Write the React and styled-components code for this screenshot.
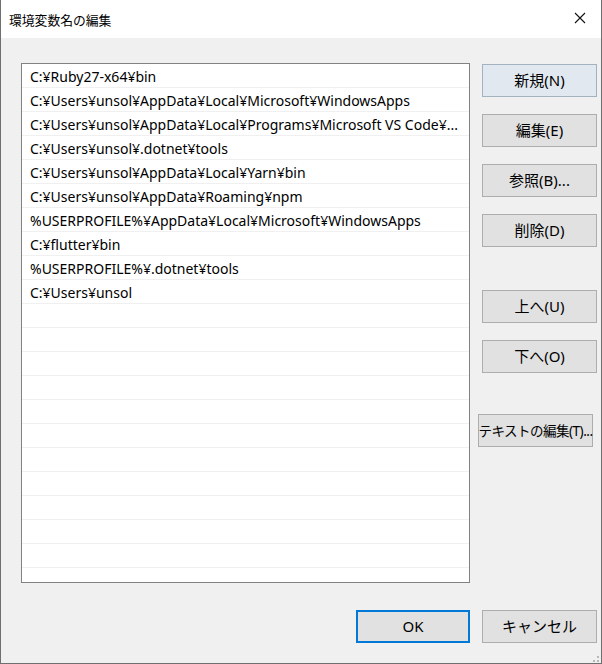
import React from "react";
import styled, { createGlobalStyle } from "styled-components";

const GlobalStyle = createGlobalStyle`
    html, body {
        margin: 0;
        padding: 0;
        background: #f0f0f0;
    }
    * {
        box-sizing: border-box;
    }
`;

const paths = [
    "C:¥Ruby27-x64¥bin",
    "C:¥Users¥unsol¥AppData¥Local¥Microsoft¥WindowsApps",
    "C:¥Users¥unsol¥AppData¥Local¥Programs¥Microsoft VS Code¥...",
    "C:¥Users¥unsol¥.dotnet¥tools",
    "C:¥Users¥unsol¥AppData¥Local¥Yarn¥bin",
    "C:¥Users¥unsol¥AppData¥Roaming¥npm",
    "%USERPROFILE%¥AppData¥Local¥Microsoft¥WindowsApps",
    "C:¥flutter¥bin",
    "%USERPROFILE%¥.dotnet¥tools",
    "C:¥Users¥unsol",
];

const sideButtons = [
    { id: "new", label: "新規(N)", hot: true },
    { id: "edit", label: "編集(E)" },
    { id: "browse", label: "参照(B)..." },
    { id: "delete", label: "削除(D)" },
    { id: "up", label: "上へ(U)", gap: 26 },
    { id: "down", label: "下へ(O)" },
    { id: "text", label: "テキストの編集(T)...", gap: 24, shift: -4, tight: true },
];

export default function App() {
    const rows = [];
    for (let i = 0; i < 22; i++) {
        rows.push(<Row key={i}>{paths[i] || ""}</Row>);
    }

    return (
        <>
            <GlobalStyle />
            <Window>
                <TitleBar>
                    <Title>環境変数名の編集</Title>
                    <CloseButton>
                        <svg width="12" height="12" viewBox="0 0 12 12">
                            <path d="M1 1 L11 11 M11 1 L1 11" stroke="#111" strokeWidth="1.1" />
                        </svg>
                    </CloseButton>
                </TitleBar>

                <Body>
                    <ListBox>{rows}</ListBox>

                    <SideColumn>
                        {sideButtons.map((b) => (
                            <Button
                                key={b.id}
                                $hot={b.hot}
                                $gap={b.gap}
                                $shift={b.shift}
                                $tight={b.tight}
                            >
                                {b.label}
                            </Button>
                        ))}
                    </SideColumn>

                    <OkButton>OK</OkButton>
                    <Button>キャンセル</Button>
                </Body>

                <Grip>
                    <svg width="12" height="12" viewBox="0 0 12 12">
                        <g fill="#b8b8b8">
                            <rect x="9" y="1" width="2" height="2" />
                            <rect x="5" y="5" width="2" height="2" />
                            <rect x="9" y="5" width="2" height="2" />
                            <rect x="1" y="9" width="2" height="2" />
                            <rect x="5" y="9" width="2" height="2" />
                            <rect x="9" y="9" width="2" height="2" />
                        </g>
                    </svg>
                </Grip>
            </Window>
        </>
    );
}

// style divs/wrappers here
const Window = styled.div`
    position: relative;
    width: 602px;
    height: 664px;
    border: 1px solid #6f6f6f;
    border-top: none;
    background: #f0f0f0;
    display: flex;
    flex-direction: column;
    font-family: "Noto Sans", "Noto Sans CJK JP", sans-serif;
    color: #000;
`;

const TitleBar = styled.div`
    height: 38px;
    background: #fff;
    display: flex;
    align-items: center;
    justify-content: space-between;
    padding-left: 8px;
`;

const Title = styled.div`
    font-family: "Noto Sans CJK JP", sans-serif;
    font-size: 12.8px;
    color: #000;
`;

const CloseButton = styled.div`
    width: 46px;
    height: 38px;
    display: flex;
    align-items: center;
    justify-content: center;
    margin-right: -2px;
    padding-bottom: 2px;
`;

const Body = styled.div`
    display: grid;
    grid-template-columns: 449px 115px;
    column-gap: 12px;
    row-gap: 27px;
    align-items: start;
    padding: 25px 0 0 20px;
`;

const ListBox = styled.div`
    height: 520px;
    border: 1px solid #828282;
    background: #fff;
    overflow: hidden;
`;

const Row = styled.div`
    height: 24px;
    border-bottom: 1px solid #f0f0f0;
    padding-left: 8px;
    font-size: 14px;
    line-height: 26px;
    white-space: nowrap;
    overflow: hidden;
`;

const SideColumn = styled.div`
    display: flex;
    flex-direction: column;
    gap: 17px;
    padding-top: 1px;
`;

const Button = styled.div`
    width: 115px;
    height: 33px;
    border: 1px solid ${(p) => (p.$hot ? "#a3b2c0" : "#adadad")};
    background: ${(p) => (p.$hot ? "#e1e8ef" : "#e1e1e1")};
    display: flex;
    align-items: center;
    justify-content: center;
    padding-bottom: 2px;
    font-size: ${(p) => (p.$tight ? "13.5px" : "15px")};
    letter-spacing: ${(p) => (p.$tight ? "-0.5px" : "normal")};
    white-space: nowrap;
    margin-top: ${(p) => p.$gap || 0}px;
    margin-left: ${(p) => p.$shift || 0}px;
`;

const OkButton = styled(Button)`
    justify-self: end;
    width: 114px;
    border: 2px solid #0078d7;
`;

const Grip = styled.div`
    position: absolute;
    right: 1px;
    bottom: 1px;
    width: 12px;
    height: 12px;
`;
